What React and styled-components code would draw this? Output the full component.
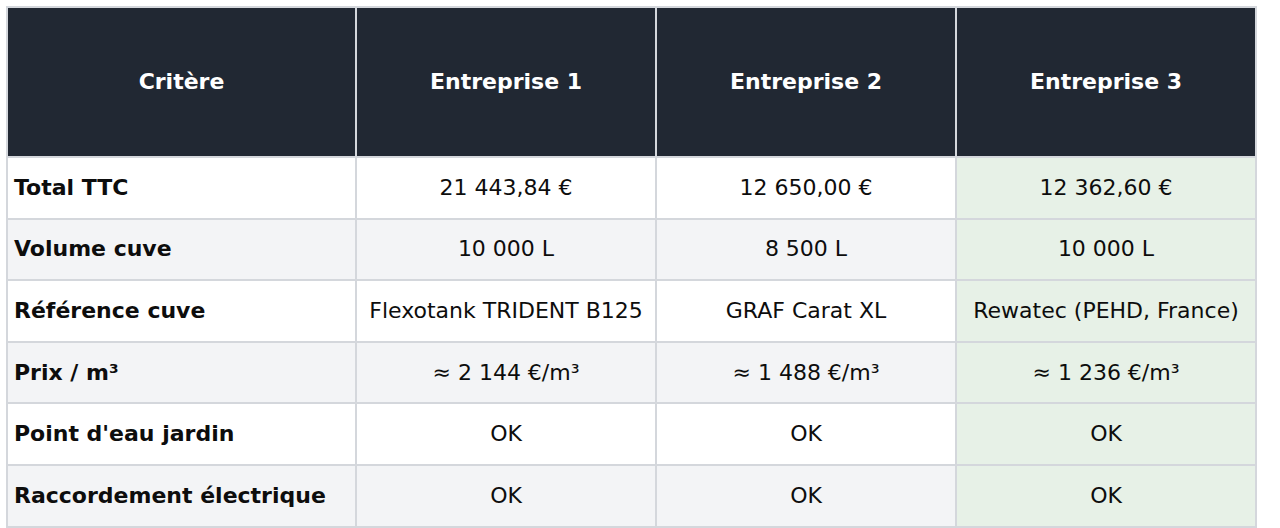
import React from "react";
import styled, { createGlobalStyle } from "styled-components";

const GlobalStyle = createGlobalStyle`
  body {
    margin: 0;
    background: #ffffff;
    font-family: "DejaVu Sans", "Liberation Sans", sans-serif;
  }
`;

const Page = styled.div`
  padding: 6px;
`;

const Table = styled.table`
  width: 1249px;
  border-collapse: collapse;
  table-layout: fixed;
  font-size: 22px;
  line-height: 26px;
  color: #0d0d0d;
`;

const Col = styled.col`
  width: ${(p) => (p.$wide ? "349px" : "300px")};
`;

const HeadRow = styled.tr`
  height: 150px;
`;

const HeadCell = styled.th`
  background: #212833;
  color: #ffffff;
  font-weight: bold;
  text-align: center;
  border: 2px solid #d4d7dc;
  padding: 0 8px;
`;

const Row = styled.tr`
  height: 61.6px;
  background: ${(p) => (p.$even ? "#f3f4f6" : "#ffffff")};
`;

const Cell = styled.td`
  border: 2px solid #d4d7dc;
  padding: 0 6px;
  text-align: ${(p) => (p.$label ? "left" : "center")};
  font-weight: ${(p) => (p.$label ? "bold" : "normal")};
  background: ${(p) => (p.$best ? "#e7f1e7" : "transparent")};
  white-space: nowrap;
`;

const columns = ["Critère", "Entreprise 1", "Entreprise 2", "Entreprise 3"];

const rows = [
  ["Total TTC", "21 443,84 €", "12 650,00 €", "12 362,60 €"],
  ["Volume cuve", "10 000 L", "8 500 L", "10 000 L"],
  ["Référence cuve", "Flexotank TRIDENT B125", "GRAF Carat XL", "Rewatec (PEHD, France)"],
  ["Prix / m³", "≈ 2 144 €/m³", "≈ 1 488 €/m³", "≈ 1 236 €/m³"],
  ["Point d'eau jardin", "OK", "OK", "OK"],
  ["Raccordement électrique", "OK", "OK", "OK"],
];

export default function App() {
  return (
    <Page>
      <GlobalStyle />
      <Table>
        <colgroup>
          <Col $wide />
          <Col />
          <Col />
          <Col />
        </colgroup>
        <thead>
          <HeadRow>
            {columns.map((c) => (
              <HeadCell key={c}>{c}</HeadCell>
            ))}
          </HeadRow>
        </thead>
        <tbody>
          {rows.map((r, i) => (
            <Row key={r[0]} $even={i % 2 === 1}>
              {r.map((v, j) => (
                <Cell key={j} $label={j === 0} $best={j === 3}>
                  {v}
                </Cell>
              ))}
            </Row>
          ))}
        </tbody>
      </Table>
    </Page>
  );
}
